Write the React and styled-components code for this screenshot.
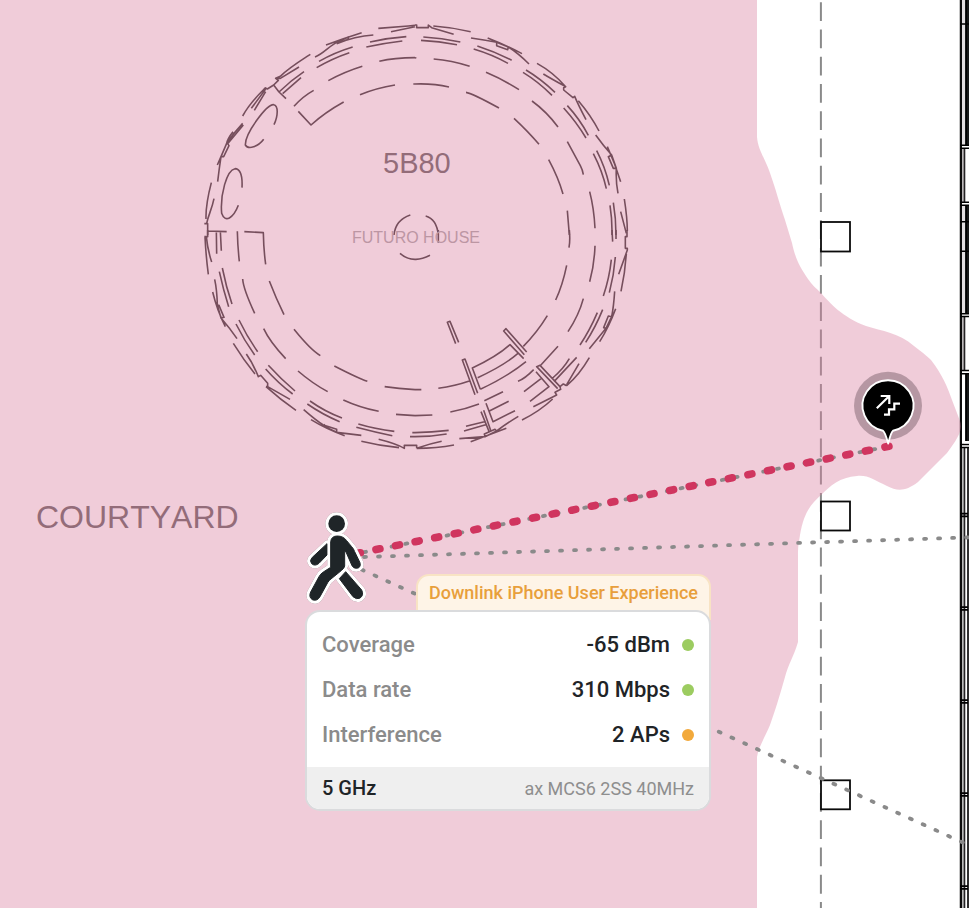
import React from "react";
import styled, { createGlobalStyle } from "styled-components";

const GlobalStyle = createGlobalStyle`
  *, *::before, *::after { box-sizing: border-box; }
  body { margin: 0; background: #ffffff; font-family: Roboto, "Liberation Sans", sans-serif; }
`;

const MapView = styled.main`
  position: relative;
  width: 100%;
  min-height: 100vh;
  overflow: hidden;
  background: #ffffff;
`;

const FloorPlan = styled.svg`
  position: absolute;
  inset: 0;
  width: 100%;
  height: 100%;
  display: block;
`;

const RoomLabel = styled.text`
  font-family: "Liberation Sans", Arial, sans-serif;
  font-size: ${(p) => p.$size}px;
  font-kerning: none;
  fill: ${(p) => p.$tone};
`;

const PedestrianMark = styled.g`
  filter: drop-shadow(0 0 2px rgba(60, 30, 40, 0.6));
`;

const Popup = styled.section`
  position: absolute;
  left: 305px;
  top: 574px;
  width: 406px;
  display: flex;
  flex-direction: column;
`;

const PopupTitle = styled.h2`
  align-self: flex-end;
  margin: 0 0 -10px;
  height: 46px;
  padding: 0 11px;
  border: 2px solid #f8e3c4;
  border-bottom: 0;
  border-radius: 13px 13px 0 0;
  background: #fef4e7;
  color: #e89f3c;
  font-size: 18px;
  line-height: 34px;
  font-weight: 500;
  white-space: nowrap;
`;

const Card = styled.div`
  position: relative;
  border: 2px solid #dadbdd;
  border-radius: 15px;
  background: #ffffff;
  overflow: hidden;
`;

const Metrics = styled.dl`
  margin: 0;
  padding: 10px 15px;
`;

const MetricRow = styled.div`
  display: flex;
  align-items: center;
  height: 45px;
  font-size: 22px;
  line-height: 28px;
  font-weight: 500;
`;

const MetricName = styled.dt`
  flex: 1;
  color: #8b8b8b;
`;

const MetricValue = styled.dd`
  display: flex;
  align-items: center;
  gap: 12px;
  margin: 0;
  color: #1f2427;
`;

const Status = styled.span`
  width: 12px;
  height: 12px;
  border-radius: 50%;
  background: ${(p) => (p.$level === "good" ? "#9ccc60" : "#f2a93b")};
`;

const CardFooter = styled.footer`
  display: flex;
  align-items: center;
  justify-content: space-between;
  height: 42px;
  padding: 0 15px;
  background: #efefef;
  font-size: 18px;
  color: #8e8e8e;
`;

const Band = styled.strong`
  color: #1f2427;
  font-size: 20px;
  font-weight: 500;
`;

const metrics = [
  { name: "Coverage", value: "-65 dBm", level: "good" },
  { name: "Data rate", value: "310 Mbps", level: "good" },
  { name: "Interference", value: "2 APs", level: "warn" },
];

const COVERAGE =
  "M-10 -10H757V137C758 150 765 158 770 173C776 190 779 202 785 220L792 243C795 257 799 266 808 279C812 285 816 288 821 293C830 303 842 317 866 326C882 331 899 333 914 346C922 352 927 356 931 360C942 374 948 388 952 400L960 421C963 430 958 438 947 453L918 482C905 492 897 491 887 486C873 480 869 475 857 476C840 477 830 486 821 495C811 504 804 512 800 535C799 542 798 545 798 555V642C794 656 788 665 785 677C779 698 775 711 770 725C765 737 758 748 757 757V9000H-10Z";

/* The round house is drafted in four quadrants, on a grid of three units to a pixel. */
const quadrants = [
  {
    x: 195,
    y: 15,
    d: `M550 40L640 33L660 31M588 50L660 35M525 81Q578 69 634 65M514 96Q570 84 622 78
      M393 90Q445 70 500 53M425 86Q480 64 535 60M360 126C385 116 395 100 420 85L460 66L460 73L425 86
      M372 139Q420 112 473 96M365 158Q410 131 463 113M256 184C280 160 320 135 346 118M242 190H256L312 156
      M256 184L242 190L250 196L236 210L217 222L210 218M236 210L252 231L273 251M252 231Q288 196 327 170M263 236L318 188
      M212 218C190 240 165 262 143 303M212 222L169 280M212 230L178 286
      M237 329C250 300 250 272 236 269C215 268 150 355 151 390C160 405 190 395 206 373
      M297 274Q322 245 356 226M400 197Q450 170 502 154M553 139C590 130 625 128 660 128
      M310 289L348 330Q390 292 446 261M495 239Q545 219 600 210M655 207L660 207
      M143 325Q115 355 95 385M145 330L98 386M114 350Q98 370 95 385L78 425L67 450M98 386L102 392L86 425L78 425Q72 465 68 500
      M141 518C143 480 135 462 120 461C95 465 75 540 80 595C90 625 115 610 130 571
      M49 503C38 545 32 575 33 612M57 551C50 585 40 600 35 625M28 626H38V660M646 600C615 610 600 630 597 660`,
  },
  {
    x: 415,
    y: 15,
    d: `M0 30H5V38H40V30L50 38L116 58M55 33Q112 37 167 50M25 66Q80 69 136 81M18 76Q72 79 126 89
      M168 69Q210 75 245 82L245 92L278 104L280 96L245 82M218 69Q272 90 321 116M280 96Q310 115 342 147
      M187 93Q240 110 290 136M176 102Q230 118 279 145M333 165Q378 192 420 232M324 172Q370 200 411 241
      M366 145Q415 172 452 215M385 177Q410 192 452 215L446 218L446 225L474 248L479 244
      Q490 270 513 314M490 257Q527 300 552 348M457 272Q494 312 520 361M446 279Q485 322 513 369
      M542 360Q565 392 590 420L580 425L595 460L604 460L590 420M577 395Q600 445 617 500M604 460Q602 500 609 535
      M545 407Q570 455 583 511M535 416Q562 468 574 521M628 552Q637 610 637 648M617 590L634 655
      M595 563Q603 610 603 660M585 571Q592 615 591 660M0 128L4 129M56 132Q110 136 164 154M213 172Q265 194 312 224
      M351 258Q395 290 429 336M457 380L496 452Q503 465 505 479M524 530Q537 580 540 640
      M0 207Q55 205 102 216M153 232Q170 234 252 279M297 310Q340 350 372 388M401 434Q430 488 444 537M457 587L463 660
      M32 603Q65 612 70 660`,
  },
  {
    x: 195,
    y: 230,
    d: `M37 3L95 5M64 4L65 71M76 4L79 62M127 4Q128 50 133 94M148 5L205 8Q206 60 212 103
      M38 0V20H28M30 22Q33 80 40 133M34 20Q38 60 50 96M82 114Q93 170 111 222M73 125Q85 180 101 230
      M59 148Q66 180 67 225L72 226L87 262L78 264L67 225M53 186Q66 240 91 290M78 264Q105 295 126 326
      M143 147Q145 177 179 250M223 153Q243 205 267 254M206 296Q224 335 272 386M297 298Q347 360 376 377
      M132 270Q156 320 188 365M123 282Q148 332 179 375M115 340Q146 390 180 432M154 372Q174 400 190 440
      L197 436L218 460L218 470H213M218 470L285 508M213 470Q255 508 303 541M220 406Q258 448 300 483M212 417Q250 460 293 492
      M309 423Q352 460 398 485M418 408Q490 445 517 454M326 539Q365 573 385 585L425 598V607L385 588L390 583
      M348 569Q395 598 449 617M425 607L499 616M345 513Q390 545 441 564M337 522Q385 555 434 575
      M445 510Q495 533 551 544M569 470Q610 476 660 479M490 582Q540 597 598 604M484 592Q540 607 592 617
      M603 553L660 557M499 634Q555 648 612 653M551 628Q600 640 628 655V646H660M652 608H660M645 620H660M615 70Q635 88 660 88`,
  },
  {
    x: 415,
    y: 230,
    d: `M0 88Q20 89 45 76M70 0V38M463 0Q466 30 462 53M455 106Q443 165 422 210M397 257Q366 308 325 349
      M540 47Q538 105 524 155M505 206Q492 255 459 305M429 349L375 408M591 0L593 35M603 0V27
      M601 81Q597 135 583 188M589 89Q583 145 565 198M636 0V20H631V55H637V60L611 133M634 72Q630 130 618 184
      M599 184Q596 230 590 260L573 295L566 293L580 258L590 260M602 236Q582 290 554 335M573 295L523 356
      M563 239Q541 293 512 337M547 248Q524 302 495 345M523 383Q493 435 455 467M492 401L455 464M485 382L417 455M463 386Q445 417 413 444
      M328 374L266 303L273 296L335 366M326 386L285 344Q245 380 172 414L196 478M308 371Q265 408 188 443M333 395Q280 438 196 478
      M180 494L142 390L150 387L188 490M122 341L97 277L105 274L131 337M70 475Q120 468 163 453M0 479H19
      M428 476L365 410L375 406L435 470M363 425L402 470L345 514M309 454Q330 446 356 419M327 485L379 445
      M413 507Q375 543 321 570M355 530L425 495L420 487L437 478L435 470L445 462L455 467
      M208 512L264 485M106 546Q150 538 192 522M213 520L234 575L300 542M223 543L281 514
      M222 604L198 545M206 541L228 604M153 589L208 575M147 603L212 584M208 612L240 598L245 603L210 620Z
      M245 603Q275 580 310 559M133 626L210 620M167 635L274 595M0 608Q50 607 101 601M0 620Q50 620 95 612
      M0 557L52 555M5 655Q65 655 117 645M5 655Q45 641 80 634M0 646H5V655`,
  },
];

const BODY =
  "M107 125Q109 108 127 108Q145 108 155 122L170 140Q176 146 179 155L195 188Q199 204 184 205Q175 205 171 197L153 156L149 153V198Q148 205 140 211L108 237Q102 241 98 248L75 290Q66 305 52 299Q40 291 47 276L72 230Q76 222 85 216L107 202Z";
const BACK_LIMBS =
  "M96 131L52 172Q42 182 50 191Q60 200 72 190L96 165ZM152 215L200 270Q208 286 194 295Q184 299 174 290L133 236Z";

function Wall() {
  return (
    <g>
      <rect x="959" y="0" width="1" height="908" fill="#c4c4c4" />
      <rect x="960" y="0" width="2" height="908" fill="#0c0c0c" />
      <rect x="962" y="0" width="3" height="145" fill="#e2dfe1" />
      <rect x="962" y="148" width="2" height="54" fill="#bdb9bb" />
      <rect x="962" y="205" width="3" height="109" fill="#e2dfe1" />
      <rect x="962" y="317" width="2" height="53" fill="#bdb9bb" />
      <rect x="962" y="374" width="3" height="69" fill="#ffffff" />
      <rect x="962" y="447" width="2" height="461" fill="#bababa" />
      <path d="M965 0h10v145h-10zM965 205h10v109h-10zM965 374h10v67h-10z" fill="#161818" />
      <path d="M966.5 0V145M966.5 205V314M966.5 374V441" stroke="#000" />
      <path d="M964.5 148V202M964.5 317V370M964.5 447V908" stroke="#242224" strokeWidth="1.6" />
      <rect x="967" y="447" width="8" height="461" fill="#303030" />
      <path
        d="M960 24H975M960 145.2H975M960 148.2H975M960 202.2H975M960 205.2H975M960 221.7H975M960 251.3H975M960 313.7H975M960 316.5H975M960 370.5H975M960 373.7H975M960 444.5H975M960 447.5H975"
        stroke="#000"
        strokeWidth="1.5"
      />
      <path d="M964 442.3H975" stroke="#fff" strokeWidth="2" />
      {[515, 608.5, 701.5, 794.5, 887.5].map((y) => (
        <path key={y} d={`M960 ${y - 1.4}H968M960 ${y + 1.4}H968`} stroke="#000" strokeWidth="1.7" />
      ))}
    </g>
  );
}

function Pedestrian() {
  return (
    <PedestrianMark transform="translate(295 500) scale(.33333)" strokeLinejoin="round">
      <g fill="#fff" stroke="#fff" strokeWidth="20">
        <circle cx="125" cy="71" r="24" />
        <path d={BACK_LIMBS} />
        <path d={BODY} />
      </g>
      <path d={BACK_LIMBS} fill="#1f2528" stroke="#1f2528" strokeWidth="3" />
      <path d={BODY} fill="#fff" stroke="#fff" strokeWidth="17" />
      <path d={BODY} fill="#1f2528" stroke="#1f2528" strokeWidth="3" />
      <circle cx="125" cy="71" r="25" fill="#1f2528" />
    </PedestrianMark>
  );
}

function AccessPoint() {
  return (
    <g>
      <circle cx="888" cy="405.7" r="34" fill="rgba(40, 20, 30, .29)" />
      <path
        d="M883 430.7A25.5 25.5 0 1 1 893 430.7Q891 432 888.2 443.5Q885 432 883 430.7Z"
        fill="#000"
        stroke="#fff"
        strokeWidth="1.9"
        strokeLinejoin="round"
      />
      <path
        d="M876.8 408.2L889 396.3M880.7 396H889.3V404M884 414.7H889V409.3H894.3V403.7H900"
        fill="none"
        stroke="#fff"
        strokeWidth="2.2"
      />
    </g>
  );
}

export default function App() {
  return (
    <>
      <GlobalStyle />
      <MapView>
        <FloorPlan role="img" aria-label="Courtyard floor plan with signal coverage">
          <path d="M820.9 2.2V908" stroke="#8a8a8a" strokeWidth="2" strokeDasharray="18.8 8.47" />
          <g fill="#fff" stroke="#0a0a0a" strokeWidth="1.8">
            <rect x="821" y="222" width="29" height="29.5" />
            <rect x="821" y="501.5" width="29" height="29" />
            <rect x="821" y="780.3" width="29" height="29" />
          </g>
          <Wall />
          {quadrants.map((q) => (
            <path
              key={`${q.x}-${q.y}`}
              transform={`translate(${q.x} ${q.y}) scale(.33333)`}
              d={q.d}
              fill="none"
              stroke="#342e30"
              strokeWidth="4.8"
              strokeLinejoin="round"
            />
          ))}
          <RoomLabel x="383" y="173" $size={29} $tone="#65605f">5B80</RoomLabel>
          <RoomLabel x="352" y="243" $size={16} $tone="#a9a5a6">FUTURO HOUSE</RoomLabel>
          <RoomLabel x="36" y="528" $size={32} $tone="#65605f">COURTYARD</RoomLabel>
          <path d={COVERAGE} fill="rgba(217, 128, 160, .4)" />

          <g fill="none" stroke="#8a8a8a" strokeWidth="3.8" strokeLinecap="round">
            <path d="M364 557L982 537" strokeDasharray="2 12.01" />
            <path d="M361.8 569.6L980 850.3" strokeDasharray="2 12" />
            <path d="M889 446.3L360 553" strokeDasharray="2 12.04" />
          </g>
          <path
            d="M888.9 446.3L359 553"
            stroke="#d0355f"
            strokeWidth="7.6"
            strokeLinecap="round"
            strokeDasharray="4 15.97"
          />
          <AccessPoint />
          <Pedestrian />
        </FloorPlan>

        <Popup aria-label="User experience at this location">
          <PopupTitle>Downlink iPhone User Experience</PopupTitle>
          <Card>
            <Metrics>
              {metrics.map((m) => (
                <MetricRow key={m.name}>
                  <MetricName>{m.name}</MetricName>
                  <MetricValue>
                    {m.value}
                    <Status $level={m.level} />
                  </MetricValue>
                </MetricRow>
              ))}
            </Metrics>
            <CardFooter>
              <Band>5 GHz</Band>
              <span>ax MCS6 2SS 40MHz</span>
            </CardFooter>
          </Card>
        </Popup>
      </MapView>
    </>
  );
}
